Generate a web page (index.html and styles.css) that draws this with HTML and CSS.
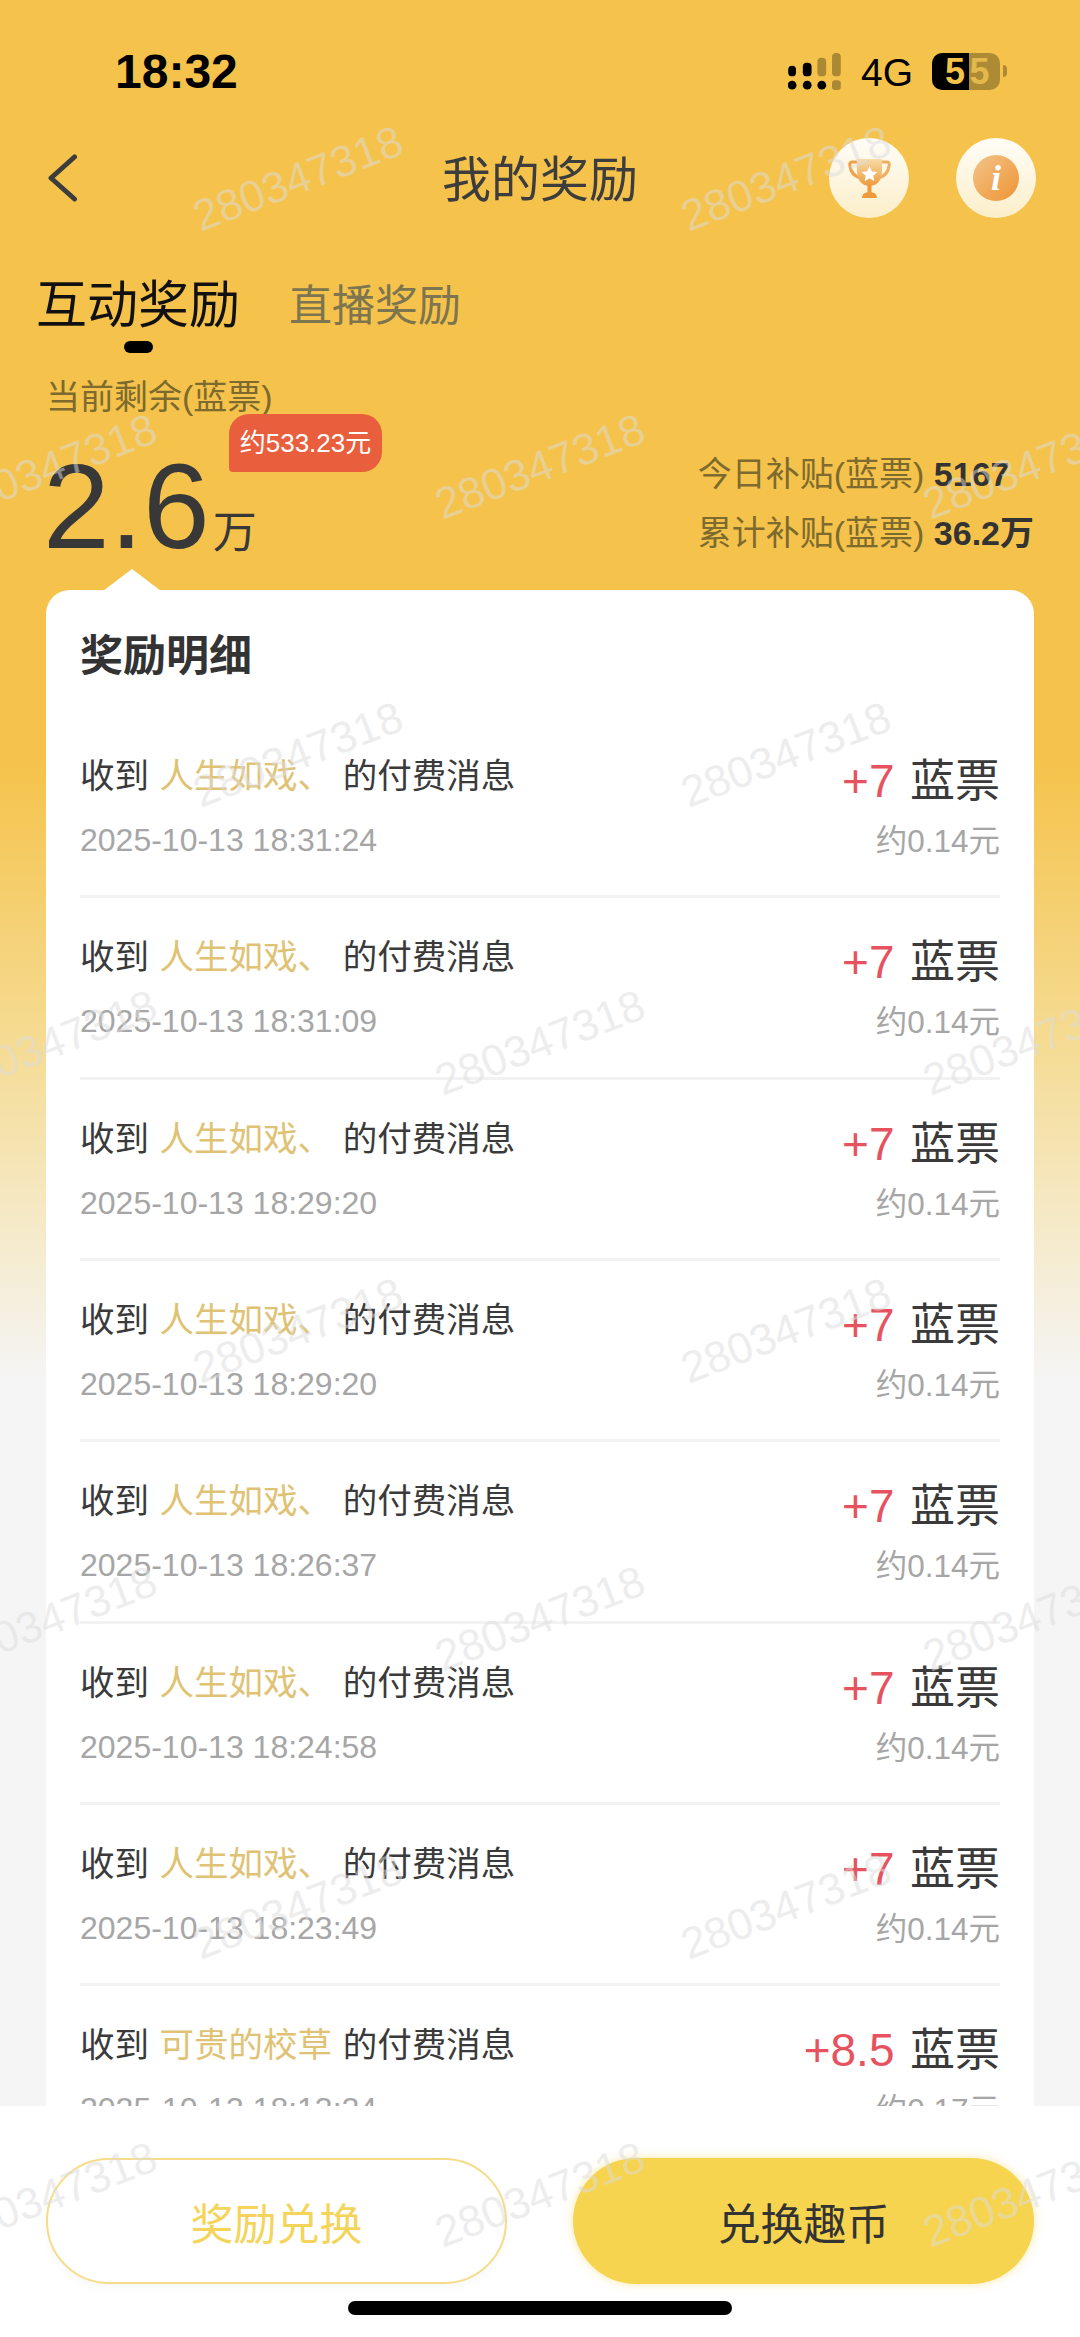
FILE: index.html
```html
<!DOCTYPE html>
<html lang="zh">
<head>
  <meta charset="UTF-8">
  <title>我的奖励</title>
  <link rel="stylesheet" href="styles.css">
</head>
<body>
<div class="page">

  <div class="status">
    <span class="time">18:32</span>
    <div class="status-right">
      <svg class="signal" width="53" height="37" viewBox="0 0 54 38">
        <rect x="0" y="13" width="8" height="11" rx="4" fill="#000"/>
        <rect x="15" y="10" width="9" height="14" rx="4" fill="#000"/>
        <rect x="30" y="5" width="9" height="19" rx="4" fill="#000" opacity=".3"/>
        <rect x="45" y="0" width="9" height="24" rx="4" fill="#000" opacity=".3"/>
        <circle cx="4" cy="33" r="4.5" fill="#000"/>
        <circle cx="19.5" cy="33" r="4.5" fill="#000"/>
        <circle cx="34.5" cy="33" r="4.5" fill="#000"/>
        <rect x="45" y="28" width="9" height="10" rx="3" fill="#000" opacity=".3"/>
      </svg>
      <span class="net">4G</span>
      <div class="battery">
        <div class="battery-fill"><span>5</span></div>
        <div class="battery-rest"><span>5</span></div>
        <i class="battery-tip"></i>
      </div>
    </div>
  </div>

  <div class="nav">
    <svg class="back" width="32" height="50" viewBox="0 0 32 50">
      <path d="M28.5 4 L5 25 L28.5 46" fill="none" stroke="#3c3c3c" stroke-width="5" stroke-linecap="round" stroke-linejoin="round"/>
    </svg>
    <h1>我的奖励</h1>
    <div class="nav-icons">
      <div class="round-btn">
        <svg width="43" height="39" viewBox="0 0 43 39">
          <defs>
            <linearGradient id="cup" x1="0" y1="0" x2="0" y2="1">
              <stop offset="0" stop-color="#f8dca8"/>
              <stop offset="1" stop-color="#ee9a3c"/>
            </linearGradient>
          </defs>
          <path d="M9 3 H4 Q1 3 2 7 Q3 16 12 19" fill="none" stroke="#ef9f45" stroke-width="3"/>
          <path d="M34 3 H39 Q42 3 41 7 Q40 16 31 19" fill="none" stroke="#f0ae62" stroke-width="3"/>
          <path d="M9 0 H34 V11 Q34 26 21.5 27 Q9 26 9 11 Z" fill="url(#cup)"/>
          <rect x="19.5" y="26" width="4" height="8" fill="#ee9a3c"/>
          <path d="M14 39 Q14 33 21.5 33 Q29 33 29 39 Z" fill="#ee9a3c"/>
          <path d="M21.500 7 L23.800 12.500 L29.500 13 L25.200 16.700 L26.500 22.300 L21.500 19.300 L16.500 22.300 L17.800 16.700 L13.500 13 L19.200 12.500 Z" fill="#fff"/>
        </svg>
      </div>
      <div class="round-btn">
        <div class="info-dot">i</div>
      </div>
    </div>
  </div>

  <div class="tabs">
    <div class="tab tab-on">互动奖励<i></i></div>
    <div class="tab">直播奖励</div>
  </div>

  <div class="summary">
    <div class="balance">
      <div class="balance-label">当前剩余(蓝票)</div>
      <div class="balance-num">2.6<small>万</small></div>
      <div class="badge">约533.23元</div>
    </div>
    <div class="subsidy">
      <div>今日补贴(蓝票) <b>5167</b></div>
      <div>累计补贴(蓝票) <b>36.2万</b></div>
    </div>
  </div>

  <div class="card">
    <i class="card-arrow"></i>
    <h2>奖励明细</h2>

    <div class="row">
      <div class="row-left">
        <div class="msg">收到 <em>人生如戏、</em> 的付费消息</div>
        <div class="when">2025-10-13 18:31:24</div>
      </div>
      <div class="row-right">
        <div class="amount"><span>+7</span> 蓝票</div>
        <div class="yuan">约0.14元</div>
      </div>
    </div>

    <div class="row">
      <div class="row-left">
        <div class="msg">收到 <em>人生如戏、</em> 的付费消息</div>
        <div class="when">2025-10-13 18:31:09</div>
      </div>
      <div class="row-right">
        <div class="amount"><span>+7</span> 蓝票</div>
        <div class="yuan">约0.14元</div>
      </div>
    </div>

    <div class="row">
      <div class="row-left">
        <div class="msg">收到 <em>人生如戏、</em> 的付费消息</div>
        <div class="when">2025-10-13 18:29:20</div>
      </div>
      <div class="row-right">
        <div class="amount"><span>+7</span> 蓝票</div>
        <div class="yuan">约0.14元</div>
      </div>
    </div>

    <div class="row">
      <div class="row-left">
        <div class="msg">收到 <em>人生如戏、</em> 的付费消息</div>
        <div class="when">2025-10-13 18:29:20</div>
      </div>
      <div class="row-right">
        <div class="amount"><span>+7</span> 蓝票</div>
        <div class="yuan">约0.14元</div>
      </div>
    </div>

    <div class="row">
      <div class="row-left">
        <div class="msg">收到 <em>人生如戏、</em> 的付费消息</div>
        <div class="when">2025-10-13 18:26:37</div>
      </div>
      <div class="row-right">
        <div class="amount"><span>+7</span> 蓝票</div>
        <div class="yuan">约0.14元</div>
      </div>
    </div>

    <div class="row">
      <div class="row-left">
        <div class="msg">收到 <em>人生如戏、</em> 的付费消息</div>
        <div class="when">2025-10-13 18:24:58</div>
      </div>
      <div class="row-right">
        <div class="amount"><span>+7</span> 蓝票</div>
        <div class="yuan">约0.14元</div>
      </div>
    </div>

    <div class="row">
      <div class="row-left">
        <div class="msg">收到 <em>人生如戏、</em> 的付费消息</div>
        <div class="when">2025-10-13 18:23:49</div>
      </div>
      <div class="row-right">
        <div class="amount"><span>+7</span> 蓝票</div>
        <div class="yuan">约0.14元</div>
      </div>
    </div>

    <div class="row">
      <div class="row-left">
        <div class="msg">收到 <em>可贵的校草</em> 的付费消息</div>
        <div class="when">2025-10-13 18:13:24</div>
      </div>
      <div class="row-right">
        <div class="amount"><span>+8.5</span> 蓝票</div>
        <div class="yuan">约0.17元</div>
      </div>
    </div>
  </div>

  <div class="footer">
    <button class="btn btn-line">奖励兑换</button>
    <button class="btn btn-fill">兑换趣币</button>
    <i class="home-bar"></i>
  </div>

  <!-- watermark grid -->
  <div class="marks">
    <div class="mark-row mark-even"><span>280347318</span><span>280347318</span></div>
    <div class="mark-row mark-odd"><span>280347318</span><span>280347318</span><span>280347318</span></div>
    <div class="mark-row mark-even"><span>280347318</span><span>280347318</span></div>
    <div class="mark-row mark-odd"><span>280347318</span><span>280347318</span><span>280347318</span></div>
    <div class="mark-row mark-even"><span>280347318</span><span>280347318</span></div>
    <div class="mark-row mark-odd"><span>280347318</span><span>280347318</span><span>280347318</span></div>
    <div class="mark-row mark-even"><span>280347318</span><span>280347318</span></div>
    <div class="mark-row mark-odd"><span>280347318</span><span>280347318</span><span>280347318</span></div>
  </div>
</div>
</body>
</html>
```

FILE: styles.css
```css
* {
  box-sizing: border-box;
}

html, body {
  margin: 0;
  padding: 0;
}

body {
  font-family: "Liberation Sans", "Noto Sans CJK SC", sans-serif;
  color: #333;
}

.page {
  position: relative;
  width: 1080px;
  height: 2337px;
  overflow: hidden;
  background: linear-gradient(#f5c34b 0, #f5c34b 760px, #f5dc95 1050px, #f5f5f5 1380px);
}

/* status bar */
.status {
  height: 138px;
  padding: 48px 80px 0 115px;
  display: flex;
  justify-content: space-between;
}

.time {
  font-size: 48px;
  font-weight: 700;
  line-height: 48px;
  color: #000;
}

.status-right {
  display: flex;
  align-items: flex-start;
  margin-top: 5px;
}

.net {
  font-size: 39px;
  line-height: 38px;
  margin: 1px 0 0 20px;
  color: #000;
}

.battery {
  position: relative;
  display: flex;
  width: 68px;
  height: 37px;
  margin-left: 19px;
  border-radius: 10px;
  font-size: 36px;
  font-weight: 700;
  line-height: 37px;
}

.battery-fill, .battery-rest {
  height: 37px;
  text-align: center;
}

.battery-fill {
  width: 37px;
  padding-left: 9px;
  background: #000;
  color: #f5c34b;
  border-radius: 10px 0 0 10px;
}

.battery-rest {
  width: 31px;
  padding-right: 10px;
  background: #ad8a34;
  color: #e4b84c;
  border-radius: 0 10px 10px 0;
}

.battery-tip {
  position: absolute;
  left: 71px;
  top: 12px;
  width: 4px;
  height: 12px;
  background: #ad8a34;
  border-radius: 0 4px 4px 0;
}

/* nav */
.nav {
  position: relative;
  height: 80px;
  padding-bottom: 6px;
  display: flex;
  align-items: center;
  justify-content: center;
}

.back {
  position: absolute;
  left: 46px;
  top: 15px;
}

.nav h1 {
  margin: 0;
  font-size: 49px;
  font-weight: 400;
  color: #3d3d3d;
}

.nav-icons {
  position: absolute;
  right: 44px;
  top: 0;
  display: flex;
  gap: 47px;
}

.round-btn {
  width: 80px;
  height: 80px;
  border-radius: 50%;
  background: linear-gradient(#fffdf8, #fbeec9);
  display: flex;
  align-items: center;
  justify-content: center;
}

.info-dot {
  width: 46px;
  height: 46px;
  border-radius: 50%;
  background: linear-gradient(135deg, #f3c48a, #ee9433);
  color: #fff;
  font-family: "Liberation Serif", serif;
  font-style: italic;
  font-weight: 700;
  font-size: 36px;
  line-height: 46px;
  text-align: center;
}

/* tabs */
.tabs {
  display: flex;
  align-items: center;
  gap: 49px;
  padding: 57px 0 0 36px;
}

.tab {
  position: relative;
  font-size: 43px;
  line-height: 62px;
  color: #7d7550;
}

.tab-on {
  font-size: 51px;
  color: #111;
}

.tab-on i {
  position: absolute;
  left: 88px;
  top: 66px;
  width: 29px;
  height: 12px;
  border-radius: 6px;
  background: #000;
}

/* balance */
.summary {
  height: 253px;
  padding: 39px 46px 0 46px;
  display: flex;
  justify-content: space-between;
}

.balance {
  position: relative;
}

.balance-label {
  font-size: 34px;
  line-height: 42px;
  color: #7d6a2e;
}

.balance-num {
  font-size: 120px;
  line-height: 120px;
  margin: 28px 0 0 -3px;
  color: #383838;
  white-space: nowrap;
}

.balance-num small {
  font-size: 44px;
  margin-left: 3px;
}

.badge {
  position: absolute;
  left: 183px;
  top: 38px;
  width: 153px;
  height: 58px;
  font-size: 26px;
  line-height: 58px;
  text-align: center;
  white-space: nowrap;
  color: #fff;
  background: #e95f3e;
  border-radius: 20px 20px 20px 4px;
}

.subsidy {
  padding-top: 69px;
  font-size: 34px;
  line-height: 59px;
  color: #7d6a2e;
  white-space: nowrap;
}

.subsidy b {
  color: #333;
}

/* card */
.card {
  position: relative;
  width: 988px;
  height: 1600px;
  margin: 0 auto;
  padding: 41px 34px 0;
  background: #fff;
  border-radius: 24px 24px 0 0;
}

.card-arrow {
  position: absolute;
  left: 57px;
  top: -21px;
  width: 0;
  height: 0;
  border-left: 29px solid transparent;
  border-right: 29px solid transparent;
  border-bottom: 22px solid #fff;
}

.card h2 {
  margin: 0 0 36px;
  font-size: 43px;
  line-height: 50px;
  font-weight: 700;
  color: #333;
}

.row {
  display: flex;
  justify-content: space-between;
  height: 181.33px;
  padding-top: 35px;
  border-bottom: 3px solid #f2f2f2;
}

.row:last-child {
  border-bottom: 0;
}

.msg {
  font-size: 34.5px;
  line-height: 48px;
  color: #3a3a3a;
  white-space: nowrap;
}

.msg em {
  font-style: normal;
  color: #e0c275;
  margin: 0 1px;
}

.when {
  margin-top: 20px;
  font-size: 32px;
  line-height: 40px;
  color: #a6a6a6;
}

.row-right {
  text-align: right;
}

.amount {
  font-size: 45px;
  line-height: 58px;
  color: #3a3a3a;
  white-space: nowrap;
}

.amount span {
  font-size: 46px;
  color: #e6535f;
  margin-right: 3px;
}

.yuan {
  margin-top: 10px;
  font-size: 31.5px;
  line-height: 40px;
  color: #a6a6a6;
}

/* bottom buttons */
.footer {
  position: absolute;
  left: 0;
  bottom: 0;
  width: 100%;
  height: 231px;
  padding: 52px 46px 0 46px;
  display: flex;
  justify-content: space-between;
  align-items: flex-start;
  background: #fff;
}

.btn {
  width: 461px;
  height: 126px;
  border-radius: 63px;
  font-family: inherit;
  font-size: 43px;
}

.btn-line {
  background: #fff;
  border: 2px solid #f6dc88;
  color: #f5d45c;
  box-shadow: 0 4px 10px rgba(0,0,0,0.03);
}

.btn-fill {
  background: #f7d44f;
  border: none;
  color: #333;
  box-shadow: 0 0 10px rgba(247,212,79,0.5);
}

.home-bar {
  position: absolute;
  left: 348px;
  bottom: 22px;
  width: 384px;
  height: 14px;
  border-radius: 7px;
  background: #000;
}

/* watermark */
.marks {
  position: absolute;
  inset: 0;
  padding-top: 193px;
  pointer-events: none;
}

.mark-row {
  display: flex;
  height: 288px;
}

.mark-even {
  padding-left: 195px;
}

.mark-odd {
  margin-left: -51px;
}

.mark-row span {
  flex: 0 0 488px;
  height: 50px;
  font-size: 44px;
  line-height: 50px;
  color: rgba(220,220,220,0.5);
  white-space: nowrap;
  transform: rotate(-21deg);
  transform-origin: 0 50%;
}
```
